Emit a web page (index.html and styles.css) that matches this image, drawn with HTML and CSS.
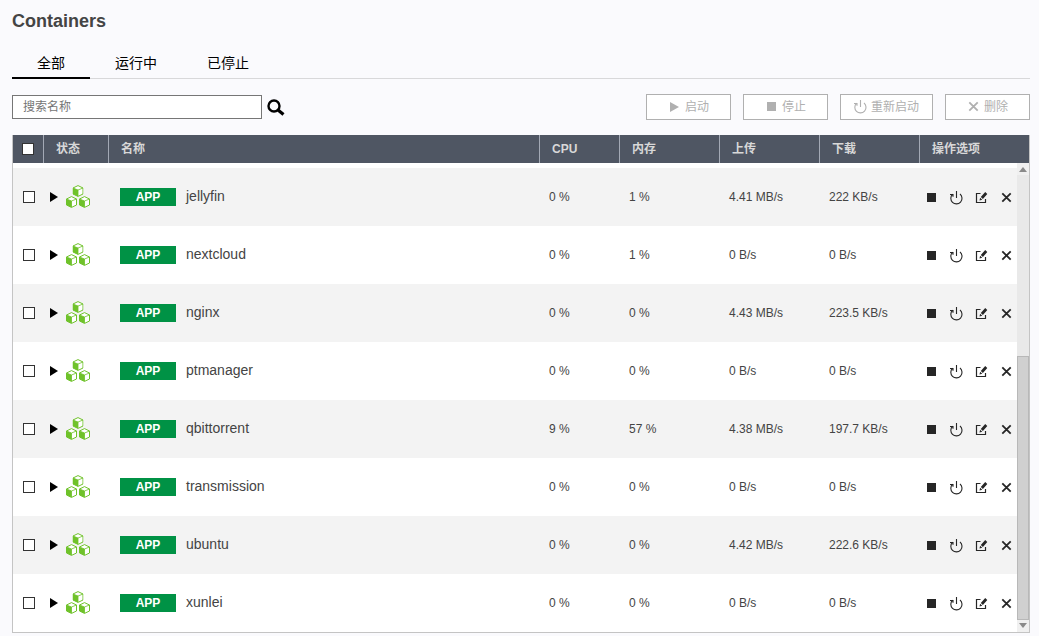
FILE: index.html
```html
<!DOCTYPE html>
<html lang="zh-CN">
<head>
<meta charset="utf-8">
<meta name="viewport" content="width=device-width, initial-scale=1">
<title>Containers</title>
<link rel="stylesheet" href="styles.css">
</head>
<body>
<svg class="sprite" aria-hidden="true">
  <symbol id="i-play" viewBox="0 0 14 14"><path d="M3 2l9 5-9 5z"/></symbol>
  <symbol id="i-stop" viewBox="0 0 14 14"><path d="M3 2h9v9H3z"/></symbol>
  <symbol id="i-power" viewBox="0 0 14 14"><path d="M1 3.500h3v2.300M3.600 3.200a5.600 5.600 0 1 0 7.400-.2M7.500 0v7" fill="none" stroke="currentColor" stroke-width="1.100"/></symbol>
  <symbol id="i-edit" viewBox="0 0 14 14"><path d="M6.500 2.500h-4v9h9V8" fill="none" stroke="currentColor" stroke-width="1.200"/><path d="M5.500 9.500l.6-2.800 2.200 2zM6.800 6L11.200 1l2.100 1.900L8.900 8z"/></symbol>
  <symbol id="i-close" viewBox="0 0 14 14"><path d="M3.300 2.300l8.400 8.400M11.700 2.300l-8.400 8.400" fill="none" stroke="currentColor" stroke-width="1.800"/></symbol>
  <symbol id="i-arrow" viewBox="0 0 8 12"><path d="M0 1l8 5-8 5z"/></symbol>
  <symbol id="i-cube" viewBox="0 0 11 12"><path d="M.5 3L5.500.6l5 2.400v6L5.500 11.400l-5-2.400z" fill="#fff" stroke="currentColor"/><path d="M.5 3l5 2v6.400l-5-2.400z"/><path d="M.5 3l5 2 5-2M5.500 5v6" fill="none" stroke="currentColor" stroke-width=".8"/></symbol>
  <symbol id="i-cubes" viewBox="0 0 24 24"><use href="#i-cube" x="6.500" y="0" width="11" height="12"/><use href="#i-cube" x="0" y="11" width="11" height="12"/><use href="#i-cube" x="13" y="11" width="11" height="12"/></symbol>
</svg>

<main class="page">
  <h1 class="title">Containers</h1>

  <nav class="tabs">
    <button class="tab tab-active" type="button">全部</button>
    <button class="tab" type="button">运行中</button>
    <button class="tab" type="button">已停止</button>
  </nav>

  <div class="toolbar">
    <form class="search">
      <input class="search-input" type="text" placeholder="搜索名称" aria-label="搜索名称">
      <button class="search-button" type="button" aria-label="搜索">
        <svg class="search-icon" viewBox="0 0 18 18"><circle cx="7" cy="8" r="5.500" fill="none" stroke="currentColor" stroke-width="2.400"/><path d="M11 12l5.500 4.500" stroke="currentColor" stroke-width="3.200"/></svg>
      </button>
    </form>
    <div class="commands">
      <button class="command" type="button" disabled><svg class="icon"><use href="#i-play"/></svg>启动</button>
      <button class="command" type="button" disabled><svg class="icon"><use href="#i-stop"/></svg>停止</button>
      <button class="command command-wide" type="button" disabled><svg class="icon"><use href="#i-power"/></svg>重新启动</button>
      <button class="command" type="button" disabled><svg class="icon"><use href="#i-close"/></svg>删除</button>
    </div>
  </div>

  <div class="grid">
    <table class="table">
      <colgroup><col class="col-check"><col class="col-state"><col><col class="col-cpu"><col class="col-stat"><col class="col-stat"><col class="col-stat"><col class="col-actions"></colgroup>
      <thead>
        <tr><th class="cell-check"><input class="check" type="checkbox" aria-label="全选"></th><th>状态</th><th>名称</th><th>CPU</th><th>内存</th><th>上传</th><th>下载</th><th>操作选项</th></tr>
      </thead>
      <tbody>
        <tr>
          <td class="cell-check"><input class="check" type="checkbox" aria-label="jellyfin"></td>
          <td><div class="state"><button class="expand" type="button" aria-label="展开"><svg class="arrow"><use href="#i-arrow"/></svg></button><svg class="cubes"><use href="#i-cubes"/></svg></div></td>
          <td><div class="name"><span class="badge">APP</span><span class="label">jellyfin</span></div></td>
          <td>0 %</td><td>1 %</td><td>4.41 MB/s</td><td>222 KB/s</td>
          <td><div class="actions"><button type="button" aria-label="停止"><svg class="icon"><use href="#i-stop"/></svg></button><button type="button" aria-label="重新启动"><svg class="icon"><use href="#i-power"/></svg></button><button type="button" aria-label="编辑"><svg class="icon"><use href="#i-edit"/></svg></button><button type="button" aria-label="删除"><svg class="icon"><use href="#i-close"/></svg></button></div></td>
        </tr>
        <tr>
          <td class="cell-check"><input class="check" type="checkbox" aria-label="nextcloud"></td>
          <td><div class="state"><button class="expand" type="button" aria-label="展开"><svg class="arrow"><use href="#i-arrow"/></svg></button><svg class="cubes"><use href="#i-cubes"/></svg></div></td>
          <td><div class="name"><span class="badge">APP</span><span class="label">nextcloud</span></div></td>
          <td>0 %</td><td>1 %</td><td>0 B/s</td><td>0 B/s</td>
          <td><div class="actions"><button type="button" aria-label="停止"><svg class="icon"><use href="#i-stop"/></svg></button><button type="button" aria-label="重新启动"><svg class="icon"><use href="#i-power"/></svg></button><button type="button" aria-label="编辑"><svg class="icon"><use href="#i-edit"/></svg></button><button type="button" aria-label="删除"><svg class="icon"><use href="#i-close"/></svg></button></div></td>
        </tr>
        <tr>
          <td class="cell-check"><input class="check" type="checkbox" aria-label="nginx"></td>
          <td><div class="state"><button class="expand" type="button" aria-label="展开"><svg class="arrow"><use href="#i-arrow"/></svg></button><svg class="cubes"><use href="#i-cubes"/></svg></div></td>
          <td><div class="name"><span class="badge">APP</span><span class="label">nginx</span></div></td>
          <td>0 %</td><td>0 %</td><td>4.43 MB/s</td><td>223.5 KB/s</td>
          <td><div class="actions"><button type="button" aria-label="停止"><svg class="icon"><use href="#i-stop"/></svg></button><button type="button" aria-label="重新启动"><svg class="icon"><use href="#i-power"/></svg></button><button type="button" aria-label="编辑"><svg class="icon"><use href="#i-edit"/></svg></button><button type="button" aria-label="删除"><svg class="icon"><use href="#i-close"/></svg></button></div></td>
        </tr>
        <tr>
          <td class="cell-check"><input class="check" type="checkbox" aria-label="ptmanager"></td>
          <td><div class="state"><button class="expand" type="button" aria-label="展开"><svg class="arrow"><use href="#i-arrow"/></svg></button><svg class="cubes"><use href="#i-cubes"/></svg></div></td>
          <td><div class="name"><span class="badge">APP</span><span class="label">ptmanager</span></div></td>
          <td>0 %</td><td>0 %</td><td>0 B/s</td><td>0 B/s</td>
          <td><div class="actions"><button type="button" aria-label="停止"><svg class="icon"><use href="#i-stop"/></svg></button><button type="button" aria-label="重新启动"><svg class="icon"><use href="#i-power"/></svg></button><button type="button" aria-label="编辑"><svg class="icon"><use href="#i-edit"/></svg></button><button type="button" aria-label="删除"><svg class="icon"><use href="#i-close"/></svg></button></div></td>
        </tr>
        <tr>
          <td class="cell-check"><input class="check" type="checkbox" aria-label="qbittorrent"></td>
          <td><div class="state"><button class="expand" type="button" aria-label="展开"><svg class="arrow"><use href="#i-arrow"/></svg></button><svg class="cubes"><use href="#i-cubes"/></svg></div></td>
          <td><div class="name"><span class="badge">APP</span><span class="label">qbittorrent</span></div></td>
          <td>9 %</td><td>57 %</td><td>4.38 MB/s</td><td>197.7 KB/s</td>
          <td><div class="actions"><button type="button" aria-label="停止"><svg class="icon"><use href="#i-stop"/></svg></button><button type="button" aria-label="重新启动"><svg class="icon"><use href="#i-power"/></svg></button><button type="button" aria-label="编辑"><svg class="icon"><use href="#i-edit"/></svg></button><button type="button" aria-label="删除"><svg class="icon"><use href="#i-close"/></svg></button></div></td>
        </tr>
        <tr>
          <td class="cell-check"><input class="check" type="checkbox" aria-label="transmission"></td>
          <td><div class="state"><button class="expand" type="button" aria-label="展开"><svg class="arrow"><use href="#i-arrow"/></svg></button><svg class="cubes"><use href="#i-cubes"/></svg></div></td>
          <td><div class="name"><span class="badge">APP</span><span class="label">transmission</span></div></td>
          <td>0 %</td><td>0 %</td><td>0 B/s</td><td>0 B/s</td>
          <td><div class="actions"><button type="button" aria-label="停止"><svg class="icon"><use href="#i-stop"/></svg></button><button type="button" aria-label="重新启动"><svg class="icon"><use href="#i-power"/></svg></button><button type="button" aria-label="编辑"><svg class="icon"><use href="#i-edit"/></svg></button><button type="button" aria-label="删除"><svg class="icon"><use href="#i-close"/></svg></button></div></td>
        </tr>
        <tr>
          <td class="cell-check"><input class="check" type="checkbox" aria-label="ubuntu"></td>
          <td><div class="state"><button class="expand" type="button" aria-label="展开"><svg class="arrow"><use href="#i-arrow"/></svg></button><svg class="cubes"><use href="#i-cubes"/></svg></div></td>
          <td><div class="name"><span class="badge">APP</span><span class="label">ubuntu</span></div></td>
          <td>0 %</td><td>0 %</td><td>4.42 MB/s</td><td>222.6 KB/s</td>
          <td><div class="actions"><button type="button" aria-label="停止"><svg class="icon"><use href="#i-stop"/></svg></button><button type="button" aria-label="重新启动"><svg class="icon"><use href="#i-power"/></svg></button><button type="button" aria-label="编辑"><svg class="icon"><use href="#i-edit"/></svg></button><button type="button" aria-label="删除"><svg class="icon"><use href="#i-close"/></svg></button></div></td>
        </tr>
        <tr>
          <td class="cell-check"><input class="check" type="checkbox" aria-label="xunlei"></td>
          <td><div class="state"><button class="expand" type="button" aria-label="展开"><svg class="arrow"><use href="#i-arrow"/></svg></button><svg class="cubes"><use href="#i-cubes"/></svg></div></td>
          <td><div class="name"><span class="badge">APP</span><span class="label">xunlei</span></div></td>
          <td>0 %</td><td>0 %</td><td>0 B/s</td><td>0 B/s</td>
          <td><div class="actions"><button type="button" aria-label="停止"><svg class="icon"><use href="#i-stop"/></svg></button><button type="button" aria-label="重新启动"><svg class="icon"><use href="#i-power"/></svg></button><button type="button" aria-label="编辑"><svg class="icon"><use href="#i-edit"/></svg></button><button type="button" aria-label="删除"><svg class="icon"><use href="#i-close"/></svg></button></div></td>
        </tr>
      </tbody>
    </table>
    <div class="scrollbar" aria-hidden="true">
      <svg class="scroll-end" viewBox="0 0 12 12"><path d="M2 9l4-5 4 5z"/></svg>
      <div class="scroll-before"></div>
      <div class="scroll-thumb"></div>
      <svg class="scroll-end" viewBox="0 0 12 12"><path d="M2 3l4 5 4-5z"/></svg>
    </div>
  </div>
</main>
</body>
</html>
```
FILE: styles.css
```css
* {
  box-sizing: border-box;
}

body {
  margin: 0;
  background: #fafafd;
  color: #444;
  font: 12px/16px "Liberation Sans", Arial, "Noto Sans CJK SC", sans-serif;
}

button,
input {
  margin: 0;
  font: inherit;
}

button {
  padding: 0;
  border: 0;
  background: none;
  color: inherit;
}

svg {
  display: block;
  flex: none;
  fill: currentColor;
}

.sprite {
  position: absolute;
  width: 0;
  height: 0;
}

.page {
  padding: 10px 9px 3px 12px;
}

.title {
  margin: 0;
  color: #444;
  font-size: 18px;
  line-height: 22px;
}

/* Tabs */
.tabs {
  display: flex;
  margin-top: 15px;
  border-bottom: 1px solid #d8d8da;
}

.tab {
  height: 32px;
  margin-bottom: -1px;
  padding: 2px 25px 0;
  border-bottom: 2px solid transparent;
  color: #000;
  font-size: 14px;
  line-height: 28px;
}

.tab-active {
  border-bottom-color: #000;
}

/* Search and commands */
.toolbar {
  display: flex;
  align-items: center;
  justify-content: space-between;
  margin: 15px 0;
}

.search,
.commands {
  display: flex;
  align-items: center;
}

.search {
  gap: 5px;
}

.search-input {
  width: 250px;
  height: 24px;
  padding: 0 10px;
  border: 1px solid #767676;
  border-radius: 0;
  background: #fff;
}

.search-input::placeholder {
  color: #757575;
}

.search-button {
  color: #000;
}

.search-icon {
  width: 18px;
  height: 18px;
}

.commands {
  gap: 12px;
}

.command {
  display: flex;
  align-items: center;
  gap: 4px;
  height: 26px;
  padding: 0 21px 0 20px;
  border: 1px solid #b0b0b0;
  background: #fff;
  color: #b0b0b0;
}

.command-wide {
  padding: 0 13px 0 12px;
}

.icon {
  width: 14px;
  height: 14px;
}

/* Container list */
.grid {
  position: relative;
  border: 1px solid #c4c4c4;
  border-top: 0;
  background: #fff;
}

.table {
  width: 100%;
  border-collapse: separate;
  border-spacing: 0;
  table-layout: fixed;
}

.col-check { width: 31px; }
.col-state { width: 65px; }
.col-cpu { width: 80px; }
.col-stat { width: 100px; }
.col-actions { width: 109px; }

th {
  height: 28px;
  padding: 0 12px;
  border-right: 1px solid #a3a9b5;
  background: #4f5663;
  color: #d8d8d8;
  text-align: left;
}

th:last-child {
  border-right: 0;
}

td {
  height: 58px;
  padding: 0 9px;
  background: #fff;
}

tbody tr:nth-child(odd) td {
  background: #f3f3f3;
}

tbody tr:first-child td {
  height: 63px;
  border-top: 5px solid #fff;
}

th.cell-check {
  padding: 0 9px;
}

td.cell-check {
  padding: 0 10px;
}

.check {
  display: block;
  width: 12px;
  height: 12px;
  appearance: none;
  border: 1px solid #333;
  background: #fff;
}

.state {
  display: flex;
  align-items: center;
  gap: 8px;
  margin-left: -3px;
  color: #6fc22a;
}

.expand {
  color: #000;
}

.arrow {
  width: 8px;
  height: 12px;
}

.cubes {
  width: 24px;
  height: 24px;
}

.name {
  display: flex;
  align-items: center;
  gap: 10px;
  padding-left: 2px;
}

.label {
  padding-bottom: 2px;
  font-size: 14px;
}

.badge {
  width: 56px;
  background: #009245;
  color: #fff;
  font-weight: bold;
  line-height: 18px;
  text-align: center;
}

.actions {
  display: flex;
  gap: 11px;
  margin-left: -5px;
  padding-top: 2px;
  color: #262626;
}

/* Scrollbar */
.scrollbar {
  position: absolute;
  top: 28px;
  right: 0;
  bottom: 0;
  display: flex;
  flex-direction: column;
  width: 12px;
  background: #e9e9e9;
}

.scroll-end {
  width: 12px;
  height: 12px;
  background: #f0f0f0;
  fill: #8a8a8a;
}

.scroll-before {
  flex: 182;
}

.scroll-thumb {
  flex: 263;
  border: 1px solid #b8b8b8;
  background: #d0d0d0;
}
```
